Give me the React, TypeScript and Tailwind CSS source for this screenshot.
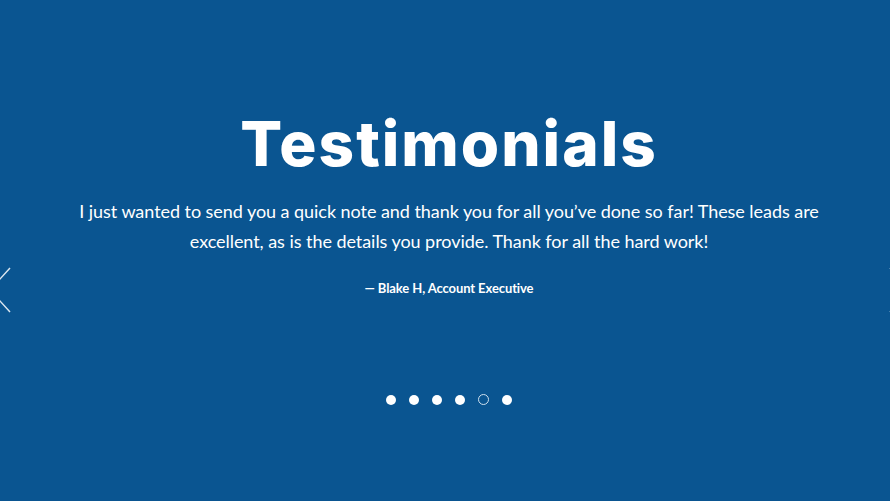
import { useState } from "react";

const slides = [0, 1, 2, 3, 4, 5];

export default function App() {
  const [active, setActive] = useState(4);

  return (
    <section className="relative h-[501px] w-full overflow-hidden bg-[#0a5591] text-white">
      <button type="button" className="absolute left-[-12px] top-[266px]" aria-label="Previous">
        <svg width="24" height="48" viewBox="0 0 24 48" fill="none" stroke="#dbe6f0" strokeWidth="1.5">
          <path d="M22 2 L2 24 L22 46" />
        </svg>
      </button>
      <button type="button" className="absolute right-[-22px] top-[266px]" aria-label="Next">
        <svg width="24" height="48" viewBox="0 0 24 48" fill="none" stroke="#dbe6f0" strokeWidth="1.5">
          <path d="M2 2 L22 24 L2 46" />
        </svg>
      </button>

      <div className="flex flex-col items-center pl-[8px] pt-[100px]">
        <h1 className="font-['Inter',sans-serif] text-[62px] font-extrabold leading-[88px] tracking-[2px]">
          Testimonials
        </h1>
        <p className="mt-[8px] max-w-[780px] text-center font-['Lato',sans-serif] text-[18px] leading-[30px] tracking-[-0.05px]">
          I just wanted to send you a quick note and thank you for all you’ve done so far! These leads are
          excellent, as is the details you provide. Thank for all the hard work!
        </p>
        <p className="mt-[22px] font-['Lato',sans-serif] text-[13px] font-bold leading-[20px] tracking-[-0.1px]">
          — Blake H, Account Executive
        </p>
        <div className="mt-[96px] flex items-center gap-[13px]">
          {slides.map((i) => (
            <button
              key={i}
              type="button"
              onClick={() => setActive(i)}
              className={
                i === active
                  ? "h-[11px] w-[11px] rounded-full border border-[#cfe0ee]"
                  : "h-[10px] w-[10px] rounded-full bg-white"
              }
            />
          ))}
        </div>
      </div>
    </section>
  );
}
